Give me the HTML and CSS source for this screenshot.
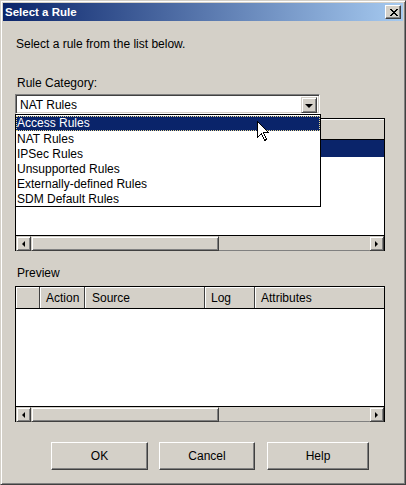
FILE: index.html
```html
<!DOCTYPE html>
<html lang="en">
<head>
<meta charset="utf-8">
<title>Select a Rule</title>
<link rel="stylesheet" href="styles.css">
</head>
<body>
<div class="window">
  <div class="titlebar">
    <span class="title">Select a Rule</span>
    <span class="close" aria-label="Close">
      <svg width="8" height="7" viewBox="0 0 8 7" shape-rendering="crispEdges">
        <path d="M0 0h2v1H0zM6 0h2v1H6zM1 1h2v1H1zM5 1h2v1H5zM2 2h4v1H2zM3 3h2v1H3zM2 4h4v1H2zM1 5h2v1H1zM5 5h2v1H5zM0 6h2v1H0zM6 6h2v1H6z" fill="#000"/>
      </svg>
    </span>
  </div>

  <div class="content">
    <p class="intro">Select a rule from the list below.</p>

    <p class="label">Rule Category:</p>
    <div class="combo">
      <div class="combo-field">
        <span class="combo-value">NAT Rules</span>
        <span class="combo-btn"><i class="tri tri-down"></i></span>
      </div>
      <ul class="combo-list">
        <li class="is-selected">Access Rules</li>
        <li>NAT Rules</li>
        <li>IPSec Rules</li>
        <li>Unsupported Rules</li>
        <li>Externally-defined Rules</li>
        <li>SDM Default Rules</li>
      </ul>
    </div>

    <div class="grid grid-rules">
      <div class="grid-head"></div>
      <div class="grid-body">
        <div class="grid-row is-selected"></div>
      </div>
      <div class="hscroll">
        <span class="sb-btn"><i class="tri tri-left"></i></span>
        <span class="sb-thumb"></span>
        <span class="sb-track"></span>
        <span class="sb-btn"><i class="tri tri-right"></i></span>
      </div>
    </div>

    <p class="label label-preview">Preview</p>
    <div class="grid grid-preview">
      <div class="grid-head head-cols">
        <span class="col col-blank"></span>
        <span class="col col-action">Action</span>
        <span class="col col-source">Source</span>
        <span class="col col-log">Log</span>
        <span class="col col-attr">Attributes</span>
      </div>
      <div class="grid-body"></div>
      <div class="hscroll">
        <span class="sb-btn"><i class="tri tri-left"></i></span>
        <span class="sb-thumb"></span>
        <span class="sb-track"></span>
        <span class="sb-btn"><i class="tri tri-right"></i></span>
      </div>
    </div>

    <div class="actions">
      <button class="btn btn-ok">OK</button>
      <button class="btn btn-cancel">Cancel</button>
      <button class="btn btn-help">Help</button>
    </div>
  </div>

  <svg class="cursor" width="13" height="21" viewBox="0 0 13 21" shape-rendering="crispEdges">
    <path d="M0.5 0.5V16.5L4.5 12.5L7.5 19.5L9.5 18.5L6.5 11.5H11.5Z" fill="#fff" stroke="#000" stroke-width="1" stroke-linejoin="miter"/>
  </svg>
</div>
</body>
</html>
```

FILE: styles.css
```css
* {
  box-sizing: border-box;
}

html,
body {
  margin: 0;
  padding: 0;
}

body {
  background: #d4d0c8;
  font: 12px "Liberation Sans", Arial, sans-serif;
  color: #000;
}

p,
ul {
  margin: 0;
  padding: 0;
}

/* dialog frame */
.window {
  position: relative;
  width: 406px;
  height: 485px;
  padding: 2px;
  display: flex;
  flex-direction: column;
  background: #d4d0c8;
  border: 1px solid;
  border-color: #d4d0c8 #404040 #404040 #d4d0c8;
  box-shadow: inset 1px 1px #fff, inset -1px -1px #808080;
}

.titlebar {
  height: 18px;
  flex: none;
  display: flex;
  align-items: center;
  padding: 0 2px;
  background: linear-gradient(to right, #0a246a, #a6caf0);
}

.title {
  color: #fff;
  font-weight: bold;
  font-size: 11.5px;
  line-height: 18px;
}

.close {
  margin-left: auto;
  width: 16px;
  height: 14px;
  display: flex;
  align-items: center;
  justify-content: center;
  padding-left: 1px;
  background: #d4d0c8;
  border: 1px solid;
  border-color: #fff #404040 #404040 #fff;
  box-shadow: inset -1px -1px #808080;
}

.close svg {
  display: block;
}

/* body of the dialog */
.content {
  flex: 1;
  display: flex;
  flex-direction: column;
  padding: 16px 18px 0 12px;
}

.intro,
.label {
  line-height: 14px;
  padding-left: 1px;
}

.label {
  margin-top: 25px;
  padding-left: 2px;
}

.label-preview {
  margin-top: 15px;
}

/* combo box */
.combo {
  position: relative;
  width: 305px;
  margin-top: 4px;
}

.combo-field {
  height: 20px;
  display: flex;
  background: #fff;
  border: 1px solid;
  border-color: #808080 #fff #fff #808080;
  box-shadow: inset 1px 1px #404040, inset -1px -1px #d4d0c8;
  padding: 2px;
}

.combo-value {
  flex: 1;
  line-height: 16px;
  padding-left: 2px;
}

.combo-btn {
  width: 16px;
  height: 16px;
  display: flex;
  align-items: center;
  justify-content: center;
  background: #d4d0c8;
  border: 1px solid;
  border-color: #d4d0c8 #404040 #404040 #d4d0c8;
  box-shadow: inset 1px 1px #fff, inset -1px -1px #808080;
}

.combo-list {
  position: absolute;
  left: 0;
  top: 100%;
  z-index: 2;
  width: 306px;
  list-style: none;
  background: #fff;
  border: 1px solid #000;
  padding: 1px 0 0;
}

.combo-list li {
  height: 15px;
  line-height: 14px;
  padding: 1px 0 0 1px;
  white-space: nowrap;
}

.combo-list li.is-selected {
  background: #0a246a;
  color: #fff;
  border: 1px dotted #e8d890;
  line-height: 13px;
  padding: 0;
}

/* triangles for arrow buttons */
.tri {
  display: block;
  width: 0;
  height: 0;
  border-style: solid;
  border-color: transparent;
}

.tri-down {
  border-width: 4px 4px 0 4px;
  border-top-color: #000;
  margin-top: 1px;
}

.tri-left {
  border-width: 3px 3px 3px 0;
  border-right-color: #000;
}

.tri-right {
  border-width: 3px 0 3px 3px;
  border-left-color: #000;
}

/* tables */
.grid {
  width: 370px;
  display: flex;
  flex-direction: column;
  border: 1px solid #000;
  border-bottom: 0;
  background: #fff;
}

.grid-rules {
  height: 133px;
  margin-top: 4px;
}

.grid-preview {
  height: 136px;
  margin-top: 6px;
}

.grid-head {
  flex: none;
  height: 21px;
  background: #d4d0c8;
  border-bottom: 1px solid #000;
  box-shadow: inset 0 1px #fff;
}

.head-cols {
  height: 22px;
  display: flex;
}

.col {
  height: 21px;
  line-height: 22px;
  padding-left: 6px;
  white-space: nowrap;
  border-right: 1px solid #404040;
  box-shadow: inset 1px 1px #fff;
}

.col-blank {
  width: 24px;
}

.col-action {
  width: 45px;
}

.col-source {
  width: 120px;
  padding-left: 7px;
}

.col-log {
  width: 50px;
}

.col-attr {
  flex: 1;
  border-right: 0;
}

.grid-body {
  flex: 1;
  background: #fff;
}

.grid-row {
  height: 17px;
}

.grid-row.is-selected {
  background: #0a246a;
}

/* horizontal scroll bars */
.hscroll {
  flex: none;
  height: 16px;
  display: flex;
  border-top: 1px solid #000;
  background: #d4d0c8;
  box-shadow: inset 0 -1px #808080;
}

.sb-btn,
.sb-thumb {
  height: 15px;
  background: #d4d0c8;
  border: 1px solid;
  border-color: #d4d0c8 #404040 #404040 #d4d0c8;
  box-shadow: inset 1px 1px #fff, inset -1px -1px #808080;
}

.sb-btn {
  width: 15px;
  display: flex;
  align-items: center;
  justify-content: center;
}

.sb-thumb {
  width: 188px;
}

.sb-track {
  flex: 1;
}

/* dialog buttons */
.actions {
  display: flex;
  margin-top: 20px;
  padding-left: 36px;
}

.btn {
  height: 28px;
  padding: 0;
  font: 12px "Liberation Sans", Arial, sans-serif;
  color: #000;
  background: #d4d0c8;
  border: 1px solid;
  border-color: #fff #404040 #404040 #fff;
  box-shadow: inset -1px -1px #808080;
}

.btn-ok {
  width: 97px;
}

.btn-cancel {
  width: 96px;
  margin-left: 11px;
}

.btn-help {
  width: 102px;
  margin-left: 12px;
}

/* mouse pointer over the open list */
.cursor {
  position: absolute;
  left: 256px;
  top: 120px;
  z-index: 3;
}
```
